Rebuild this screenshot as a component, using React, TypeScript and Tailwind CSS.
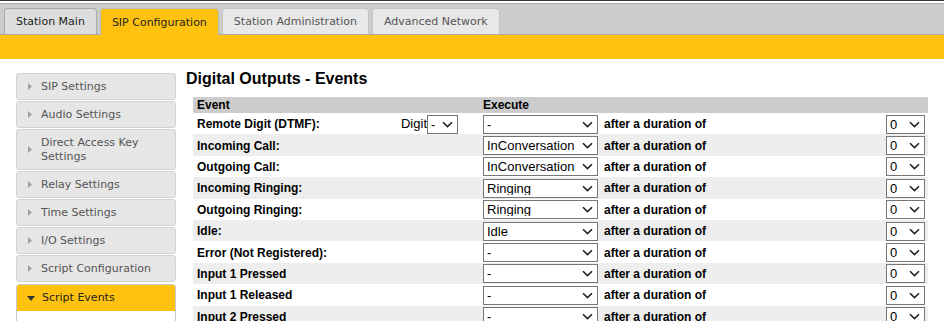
const tabs = [
  { label: "Station Main", state: "hover" },
  { label: "SIP Configuration", state: "active" },
  { label: "Station Administration", state: "idle" },
  { label: "Advanced Network", state: "idle" },
];

const menu = [
  "SIP Settings",
  "Audio Settings",
  "Direct Access Key Settings",
  "Relay Settings",
  "Time Settings",
  "I/O Settings",
  "Script Configuration",
];

const events = [
  { label: "Remote Digit (DTMF):", exec: "-", digit: true },
  { label: "Incoming Call:", exec: "InConversation" },
  { label: "Outgoing Call:", exec: "InConversation" },
  { label: "Incoming Ringing:", exec: "Ringing" },
  { label: "Outgoing Ringing:", exec: "Ringing" },
  { label: "Idle:", exec: "Idle" },
  { label: "Error (Not Registered):", exec: "-" },
  { label: "Input 1 Pressed", exec: "-" },
  { label: "Input 1 Released", exec: "-" },
  { label: "Input 2 Pressed", exec: "-" },
];

function Chevron() {
  return (
    <svg width="11" height="7" viewBox="0 0 11 7" className="shrink-0">
      <path d="M1 1.2 L5.5 5.6 L10 1.2" fill="none" stroke="#222" strokeWidth="1.6" />
    </svg>
  );
}

function FakeSelect({ value, width }: { value: string; width: string }) {
  return (
    <div
      className={`${width} h-[19px] border border-[#767676] bg-white flex items-center pl-[3px] pr-[4px] text-[13px] font-normal text-black`}
    >
      <span className="flex-1 truncate leading-none">{value}</span>
      <Chevron />
    </div>
  );
}

function Triangle({ open }: { open?: boolean }) {
  return open ? (
    <svg width="8" height="5" viewBox="0 0 8 5" className="shrink-0">
      <path d="M0 0 H8 L4 5 Z" fill="#333" />
    </svg>
  ) : (
    <svg width="4" height="7" viewBox="0 0 4 7" className="shrink-0">
      <path d="M0 0 V7 L4 3.5 Z" fill="#a0a0a0" />
    </svg>
  );
}

export default function App() {
  return (
    <div className="w-[944px] h-[321px] overflow-hidden bg-white font-['Liberation_Sans',Arial,sans-serif]">
      {/* header */}
      <div className="border-t border-[#333] pt-[2px]">
        <div className="h-[32px] bg-[#cccccc] border-t border-b border-[#aaaaaa] flex items-end pl-[4px] gap-[3px] font-['DejaVu_Sans',sans-serif] text-[11px]">
          {tabs.map((t) => (
            <div
              key={t.label}
              className={
                t.state === "active"
                  ? "h-[27px] -mb-px pt-[2px] px-[11px] flex items-center rounded-t-[4px] border border-b-0 border-[#bbb] bg-[#ffc20e] text-[#222]"
                  : t.state === "hover"
                  ? "h-[26px] pt-[2px] px-[11px] flex items-center rounded-t-[4px] border border-b-0 border-[#a8a8a8] bg-[#dddddd] text-[#222]"
                  : "h-[26px] pt-[2px] px-[11px] flex items-center rounded-t-[4px] border border-b-0 border-[#c4c4c4] bg-[#e8e8e8] text-[#555]"
              }
            >
              {t.label}
            </div>
          ))}
        </div>
        <div className="h-[24px] bg-[#ffc20e]" />
      </div>

      <div className="flex pt-[12px]">
        {/* sidebar */}
        <aside className="mt-[2px] ml-[16px] w-[160px] flex flex-col gap-[1px] font-['DejaVu_Sans',sans-serif] text-[11px]">
          {menu.map((m) => (
            <div
              key={m}
              className={`${m.length > 20 ? "h-[41px]" : "h-[27px]"} rounded-[3px] border border-[#d2d2d2] bg-[#e6e6e6] text-[#555] flex items-center pl-[11px] pr-2`}
            >
              <Triangle />
              <span className="ml-[9px] leading-[14px]">{m}</span>
            </div>
          ))}
          <div className="mt-[1px] rounded-t-[3px] border border-[#c8c8c8] overflow-hidden">
            <div className="h-[26px] bg-[#ffc20e] text-[#222] flex items-center pl-[10px]">
              <Triangle open />
              <span className="ml-[7px]">Script Events</span>
            </div>
            <div className="h-[20px] bg-white" />
          </div>
        </aside>

        {/* main */}
        <main className="ml-[10px] flex-1">
          <h1 className="text-[16px] font-bold text-black leading-[18px] -mt-[1px]">
            Digital Outputs - Events
          </h1>
          <div className="mt-[9px] ml-[7px] w-[735px] text-[12px] font-bold text-black">
            <div className="h-[16px] bg-[#cccccc] flex items-center">
              <div className="w-[290px] pl-[4px]">Event</div>
              <div>Execute</div>
            </div>
            {events.map((e, i) => (
              <div
                key={e.label}
                className={`h-[21.4px] pt-[1px] flex items-center ${i % 2 === 1 ? "bg-[#eeeeee]" : "bg-white"}`}
              >
                <div className="w-[290px] pl-[4px] flex items-center">
                  <span>{e.label}</span>
                  {e.digit && (
                    <div className="ml-auto mr-[25px] flex items-center font-normal text-[13px]">
                      <span>Digit</span>
                      <FakeSelect value="-" width="w-[31px]" />
                    </div>
                  )}
                </div>
                <FakeSelect value={e.exec} width="w-[115px]" />
                <span className="ml-[6px]">after a duration of</span>
                <div className="ml-auto mr-[3px]">
                  <FakeSelect value="0" width="w-[39px]" />
                </div>
              </div>
            ))}
          </div>
        </main>
      </div>
    </div>
  );
}
